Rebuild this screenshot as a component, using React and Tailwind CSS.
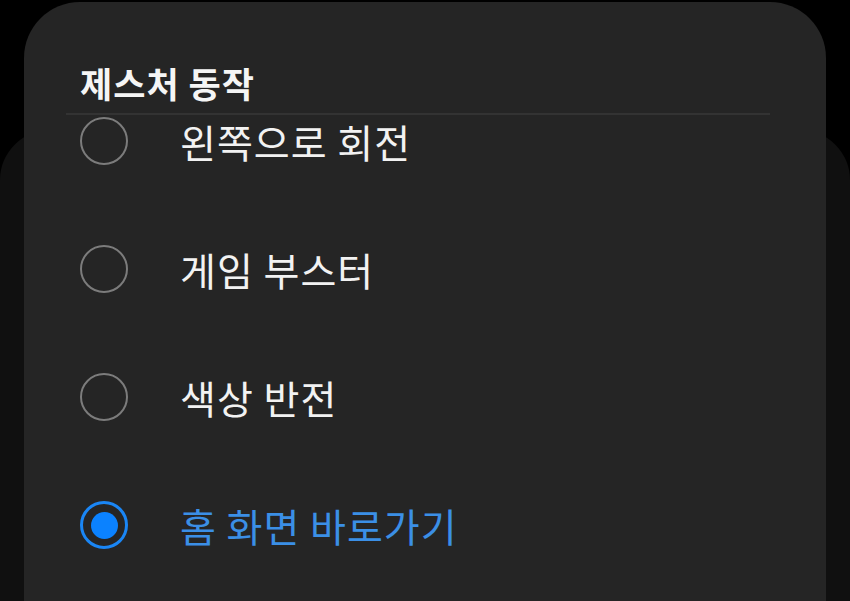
const options = [
  { id: 'rotate-left', label: '왼쪽으로 회전' },
  { id: 'game-booster', label: '게임 부스터' },
  { id: 'invert-colors', label: '색상 반전' },
  { id: 'home-shortcut', label: '홈 화면 바로가기' },
];

const Radio = ({ checked }) =>
  checked ? (
    <div className="w-12 h-12 rounded-full border-[3px] border-[#1a86f5] flex items-center justify-center shrink-0">
      <div className="w-[27px] h-[27px] rounded-full bg-[#0b82ff]" />
    </div>
  ) : (
    <div className="w-12 h-12 rounded-full border-2 border-[#7c7c7c] shrink-0" />
  );

const App = () => {
  const selected = 'home-shortcut';

  return (
    <div
      className="relative w-[850px] h-[601px] overflow-hidden bg-black"
      style={{ fontFamily: '"Noto Sans CJK KR", "Noto Sans", sans-serif' }}
    >
      {/* card behind the dialog */}
      <div className="absolute left-0 right-0 top-[130px] h-[600px] rounded-[50px] bg-[#101010]" />

      {/* Dialog */}
      <div className="relative mx-6 mt-[2px] h-[700px] rounded-[56px] bg-[#252525]">
        <div className="pl-14 pt-[60px]">
          <h2 className="text-[35px] leading-[42px] tracking-[1px] font-bold text-[#f5f5f5]">제스처 동작</h2>
        </div>
        <div className="ml-[42px] mr-14 mt-[9px] h-[2px] bg-[#333333]" />

        <div className="flex flex-col gap-[80px] mt-[2px] pl-14">
          {options.map((opt) => {
            const checked = opt.id === selected;
            return (
              <div key={opt.id} className="flex items-center h-12">
                <Radio checked={checked} />
                <span
                  className={`ml-[52px] text-[39px] leading-none tracking-[1px] ${
                    checked ? 'text-[#3b8fe6]' : 'text-[#f2f2f2]'
                  }`}
                >
                  {opt.label}
                </span>
              </div>
            );
          })}
        </div>
      </div>
    </div>
  );
};

export default App;
